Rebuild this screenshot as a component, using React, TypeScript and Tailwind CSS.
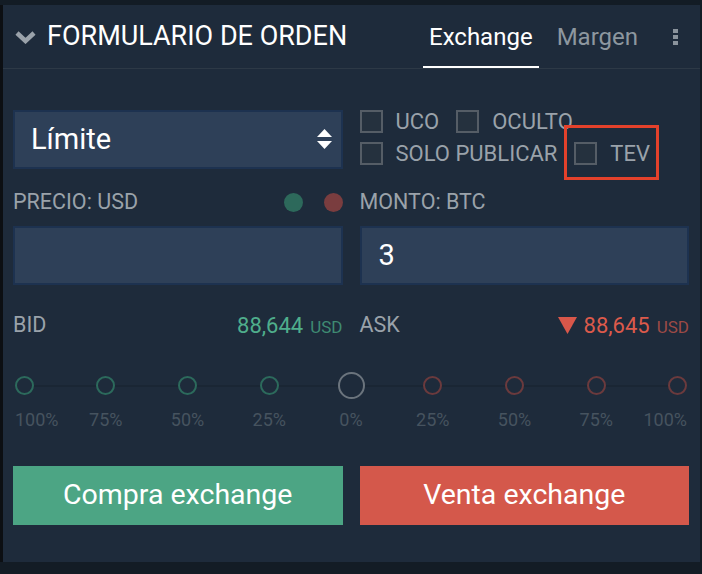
import React from "react";

const MARKS = [
  { label: "100%", tone: "buy" },
  { label: "75%", tone: "buy" },
  { label: "50%", tone: "buy" },
  { label: "25%", tone: "buy" },
  { label: "0%", tone: "zero" },
  { label: "25%", tone: "sell" },
  { label: "50%", tone: "sell" },
  { label: "75%", tone: "sell" },
  { label: "100%", tone: "sell" },
];

function Checkbox({ label }: { label: string }) {
  return (
    <div className="flex items-center gap-[13px]">
      <span className="h-[23px] w-[23px] border-2 border-[#555d66] bg-[#25313e]" />
      <span className="text-[22px] leading-[23px] text-[#9aa2aa]">{label}</span>
    </div>
  );
}

function Field({ value }: { value?: string }) {
  return (
    <div className="flex h-[59px] items-center border-2 border-[#1d3250] bg-[#2e4058] pl-[17px] text-[29px] text-white">
      {value}
    </div>
  );
}

export default function App() {
  return (
    <div
      className="h-[574px] w-[702px] bg-[#131c25] pt-[5px] pl-[3px]"
      style={{ fontFamily: "Roboto, 'Noto Sans', sans-serif" }}
    >
      <div className="h-[557px] w-[697px] bg-[#1e2b3b] shadow-[-3px_0_0_#0c0f13]">
        {/* Header */}
        <div className="flex h-[64px] items-center border-b border-[#2d3946] pl-[11px] pr-[22px]">
          <svg width="23" height="14" viewBox="0 0 23 14" className="mr-[10px]">
            <polyline points="3,3 11.5,11 20,3" fill="none" stroke="#9aa2aa" strokeWidth="4.5" />
          </svg>
          <h1 className="flex-1 text-[27px] leading-none text-white">FORMULARIO DE ORDEN</h1>
          <div className="flex h-full items-end border-b-2 border-white px-[6px]">
            <span className="mb-[17px] text-[24px] leading-none text-white">Exchange</span>
          </div>
          <span className="ml-[18px] text-[24px] leading-none text-[#8d979f]">Margen</span>
          <div className="ml-[35px] flex flex-col gap-[2px]">
            <span className="h-[4px] w-[5px] bg-[#8a939c]" />
            <span className="h-[4px] w-[5px] bg-[#8a939c]" />
            <span className="h-[4px] w-[5px] bg-[#8a939c]" />
          </div>
        </div>

        <div className="px-[10px] pr-[11px] pt-[41px]">
          {/* Type + options */}
          <div className="grid grid-cols-2 gap-x-[17px]">
            <div className="flex h-[59px] items-center justify-between border-2 border-[#1d3250] bg-[#2e4058] pl-[16px] pr-[9px]">
              <span className="text-[29px] text-white">Límite</span>
              <svg width="15" height="21" viewBox="0 0 15 21">
                <polygon points="7.5,0 15,8 0,8" fill="#fff" />
                <polygon points="0,12 15,12 7.5,20" fill="#fff" />
              </svg>
            </div>
            <div className="relative flex flex-col gap-[9px]">
              <div className="flex gap-[17px]">
                <Checkbox label="UCO" />
                <Checkbox label="OCULTO" />
              </div>
              <div className="flex gap-[17px]">
                <Checkbox label="SOLO PUBLICAR" />
                <Checkbox label="TEV" />
              </div>
              <div className="absolute left-[204px] top-[15px] h-[55px] w-[95px] border-[3px] border-[#e4412b]" />
            </div>
          </div>

          {/* Labels */}
          <div className="mt-[21px] grid grid-cols-2 gap-x-[17px]">
            <div className="flex h-[24px] items-center justify-between">
              <span className="text-[21.5px] text-[#9aa2aa]">PRECIO: USD</span>
              <div className="flex gap-[21px]">
                <span className="h-[19px] w-[19px] rounded-full bg-[#2d695b]" />
                <span className="h-[19px] w-[19px] rounded-full bg-[#7a3d3f]" />
              </div>
            </div>
            <div className="flex h-[24px] items-center">
              <span className="text-[21.5px] text-[#9aa2aa]">MONTO: BTC</span>
            </div>
          </div>

          {/* Inputs */}
          <div className="mt-[12px] grid grid-cols-2 gap-x-[17px]">
            <Field />
            <Field value="3" />
          </div>

          {/* Bid / Ask */}
          <div className="mt-[26px] grid grid-cols-2 gap-x-[17px]">
            <div className="flex h-[28px] items-center justify-between">
              <span className="text-[21.5px] text-[#9aa2aa]">BID</span>
              <span className="flex items-baseline gap-[7px]">
                <span className="text-[22px] text-[#4fae8c]">88,644</span>
                <span className="text-[17px] text-[#3f8a72]">USD</span>
              </span>
            </div>
            <div className="flex h-[28px] items-center justify-between">
              <span className="text-[21.5px] text-[#9aa2aa]">ASK</span>
              <span className="flex items-center gap-[7px]">
                <svg width="19" height="17" viewBox="0 0 19 17">
                  <polygon points="0,0 19,0 9.5,17" fill="#d9574a" />
                </svg>
                <span className="flex items-baseline gap-[7px]">
                  <span className="text-[22px] text-[#dc5a4b]">88,645</span>
                  <span className="text-[17px] text-[#9c4a46]">USD</span>
                </span>
              </span>
            </div>
          </div>

          {/* Slider */}
          <div className="relative mx-[11px] mt-[33px]">
            <div className="absolute left-0 right-0 top-[13px] h-[2px] bg-[#1a2634]" />
            <div className="relative flex justify-between">
              {MARKS.map((m, i) => {
                const first = i === 0;
                const last = i === MARKS.length - 1;
                const circle =
                  m.tone === "zero"
                    ? "h-[27px] w-[27px] border-2 border-[#6b747d]"
                    : m.tone === "buy"
                      ? "mt-[4px] mb-[4px] h-[19px] w-[19px] border-2 border-[#2c6a5c]"
                      : "mt-[4px] mb-[4px] h-[19px] w-[19px] border-2 border-[#6b3a3d]";
                return (
                  <div
                    key={i}
                    className={`flex w-0 flex-col ${first ? "items-start" : last ? "items-end" : "items-center"}`}
                  >
                    <div className="flex h-[27px] items-center">
                      <span
                        className={`block shrink-0 rounded-full bg-[#1e2b3b] ${circle} ${first ? "-ml-[9px]" : ""} ${last ? "-mr-[9px]" : ""}`}
                      />
                    </div>
                    <span
                      className={`mt-[12px] whitespace-nowrap text-[18px] leading-none text-[#46535f] ${first ? "-ml-[9px]" : ""} ${last ? "-mr-[9px]" : ""}`}
                    >
                      {m.label}
                    </span>
                  </div>
                );
              })}
            </div>
          </div>

          {/* Actions */}
          <div className="mt-[37px] grid grid-cols-2 gap-x-[17px]">
            <button className="flex h-[59px] items-center justify-center bg-[#4ca584] text-[28.5px] text-white">
              Compra exchange
            </button>
            <button className="flex h-[59px] items-center justify-center bg-[#d4584b] text-[28.5px] text-white">
              Venta exchange
            </button>
          </div>
        </div>
      </div>
    </div>
  );
}
